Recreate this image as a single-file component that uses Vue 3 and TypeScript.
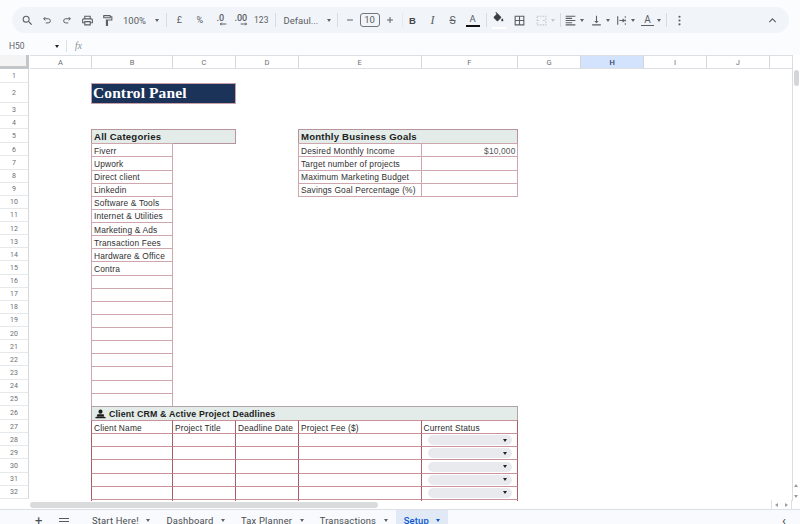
<script setup lang="ts">
interface Cell {
    col: number;
    span?: number;
    row: number;
    text?: string;
    kind?: string;
    align?: string;
}

const columns = ['A', 'B', 'C', 'D', 'E', 'F', 'G', 'H', 'I', 'J', ''];
// row 33 is cut by the scrollbar, its number does not show
const rowNumbers = Array.from({ length: 32 }, (_, i) => i + 1);

// col/row use sheet numbering: A = 1, row 1 = 1
const categories = [
    'Fiverr',
    'Upwork',
    'Direct client',
    'Linkedin',
    'Software & Tools',
    'Internet & Utilities',
    'Marketing & Ads',
    'Transaction Fees',
    'Hardware & Office',
    'Contra',
];
const goals = [
    'Desired Monthly Income',
    'Target number of projects',
    'Maximum Marketing Budget',
    'Savings Goal Percentage (%)',
];
const crmHeaders = ['Client Name', 'Project Title', 'Deadline Date', 'Project Fee ($)', 'Current Status'];

const cells: Cell[] = [
    { col: 2, span: 2, row: 2, text: 'Control Panel', kind: 'title' },
    { col: 2, span: 2, row: 5, text: 'All Categories', kind: 'head' },
    { col: 5, span: 2, row: 5, text: 'Monthly Business Goals', kind: 'head' },
];
for (let i = 0; i < 20; i++) {
    cells.push({ col: 2, row: 6 + i, text: categories[i] });
}
goals.forEach((text, i) => {
    cells.push({ col: 5, row: 6 + i, text });
    cells.push({ col: 6, row: 6 + i, text: i === 0 ? '$10,000' : '', align: 'num' });
});
cells.push({ col: 2, span: 5, row: 26, kind: 'crm-head' });
crmHeaders.forEach((text, i) => {
    cells.push({ col: 2 + i, row: 27, text, kind: 'crm' });
});
for (let r = 28; r <= 33; r++) {
    for (let c = 2; c <= 6; c++) {
        cells.push({ col: c, row: r, kind: c === 6 && r < 33 ? 'crm status' : 'crm' });
    }
}

const place = (c: Cell) => ({
    gridColumn: `${c.col + 1} / span ${c.span ?? 1}`,
    gridRow: `${c.row + 1}`,
});

const tabs = ['Start Here!', 'Dashboard', 'Tax Planner', 'Transactions', 'Setup'];
</script>

<template>
    <div class="app">
        <div class="toolbar-wrap">
            <div class="toolbar">
                <span class="tb">
                    <svg viewBox="0 0 24 24"><path d="M15.5 14h-.79l-.28-.27A6.47 6.47 0 0 0 16 9.5 6.5 6.5 0 1 0 9.5 16c1.61 0 3.09-.59 4.23-1.57l.27.28v.79l5 4.99L20.49 19l-4.99-5zm-6 0C7.01 14 5 11.99 5 9.5S7.01 5 9.5 5 14 7.01 14 9.5 11.99 14 9.5 14z" /></svg>
                </span>
                <span class="tb">
                    <svg viewBox="0 0 24 24" class="line thin"><path d="M8 5 4 9l4 4M4 9h11a5 5 0 0 1 0 10H9" /></svg>
                </span>
                <span class="tb">
                    <svg viewBox="0 0 24 24" class="line thin"><path d="M16 5l4 4-4 4M20 9H9a5 5 0 0 0 0 10h6" /></svg>
                </span>
                <span class="tb">
                    <svg viewBox="0 0 24 24"><path d="M19 8h-1V3H6v5H5c-1.66 0-3 1.34-3 3v6h4v4h12v-4h4v-6c0-1.66-1.34-3-3-3zM8 5h8v3H8V5zm8 12v2H8v-4h8v2zm2-2v-2H6v2H4v-4c0-.55.45-1 1-1h14c.55 0 1 .45 1 1v4h-2z" /></svg>
                </span>
                <span class="tb">
                    <svg viewBox="0 0 24 24"><path d="M18 4V3c0-.55-.45-1-1-1H5c-.55 0-1 .45-1 1v4c0 .55.45 1 1 1h12c.55 0 1-.45 1-1V6h1v4H9v11c0 .55.45 1 1 1h2c.55 0 1-.45 1-1v-9h8V4h-3zm-2 2H6V4h10v2z" /></svg>
                </span>
                <span class="tb-text zoom">100%<i class="caret" /></span>
                <span class="sep" />
                <span class="tb small">£</span>
                <span class="tb small">%</span>
                <span class="tb small stack">.0<svg viewBox="0 0 12 6" class="mini line"><path d="M11 3H2M4 1 2 3l2 2" /></svg></span>
                <span class="tb small stack">.00<svg viewBox="0 0 12 6" class="mini line"><path d="M1 3h9M8 1l2 2-2 2" /></svg></span>
                <span class="tb small num">123</span>
                <span class="sep" />
                <span class="tb-text font">Defaul...<i class="caret" /></span>
                <span class="sep" />
                <span class="tb">
                    <svg viewBox="0 0 24 24" class="line thin"><path d="M5 12h14" /></svg>
                </span>
                <span class="size-box">10</span>
                <span class="tb">
                    <svg viewBox="0 0 24 24" class="line thin"><path d="M5 12h14M12 5v14" /></svg>
                </span>
                <span class="sep faint" />
                <span class="tb letter bold">B</span>
                <span class="tb letter italic">I</span>
                <span class="tb letter strike">S</span>
                <span class="tb letter"><span class="color-a">A</span></span>
                <span class="sep" />
                <span class="tb fill">
                    <svg viewBox="0 0 24 24"><path d="M16.56 8.94 7.62 0 6.21 1.41l2.38 2.38-5.15 5.15c-.59.59-.59 1.54 0 2.12l5.5 5.5c.29.29.68.44 1.06.44s.77-.15 1.06-.44l5.5-5.5c.59-.58.59-1.53 0-2.12zM19 11.5s-2 2.17-2 3.5c0 1.1.9 2 2 2s2-.9 2-2c0-1.33-2-3.5-2-3.5z" /></svg>
                </span>
                <span class="tb">
                    <svg viewBox="0 0 24 24"><path d="M3 3v18h18V3H3zm8 16H5v-6h6v6zm0-8H5V5h6v6zm8 8h-6v-6h6v6zm0-8h-6V5h6v6z" /></svg>
                </span>
                <span class="tb wide disabled">
                    <svg viewBox="0 0 24 24" class="line dash"><path d="M4 4h16v16H4zM4 12h5M15 12h5" /></svg>
                    <i class="caret" />
                </span>
                <span class="sep tight" />
                <span class="tb wide">
                    <svg viewBox="0 0 24 24"><path d="M15 15H3v2h12v-2zm0-8H3v2h12V7zM3 13h18v-2H3v2zm0 8h18v-2H3v2zM3 3v2h18V3H3z" /></svg>
                    <i class="caret" />
                </span>
                <span class="tb wide">
                    <svg viewBox="0 0 24 24"><path d="M16 13h-3V3h-2v10H8l4 4 4-4zM4 19v2h16v-2H4z" /></svg>
                    <i class="caret" />
                </span>
                <span class="tb wide">
                    <svg viewBox="0 0 24 24" class="line"><path d="M5 4v16M19 4v3M19 10v4M19 17v3M8 12h9M14 9l3 3-3 3" /></svg>
                    <i class="caret" />
                </span>
                <span class="tb wide">
                    <span class="rotate-a">A</span>
                    <i class="caret" />
                </span>
                <span class="sep tight last" />
                <span class="tb">
                    <svg viewBox="0 0 24 24"><circle cx="12" cy="5" r="2" /><circle cx="12" cy="12" r="2" /><circle cx="12" cy="19" r="2" /></svg>
                </span>
                <span class="spacer" />
                <span class="tb">
                    <svg viewBox="0 0 24 24" class="line"><path d="m6 15 6-6 6 6" /></svg>
                </span>
            </div>
        </div>

        <div class="formula-bar">
            <span class="name-box">H50<i class="caret dark" /></span>
            <span class="fx-sep" />
            <span class="fx">fx</span>
        </div>

        <div class="sheet">
            <div class="grid">
                <div class="corner" />
                <div
                    v-for="(c, i) in columns"
                    :key="'c' + i"
                    class="col-head"
                    :class="{ active: c === 'H' }"
                >
                    {{ c }}
                </div>
                <div
                    v-for="r in rowNumbers"
                    :key="'r' + r"
                    class="row-head"
                    :style="{ gridRow: r + 1 }"
                >
                    {{ r }}
                </div>
                <div
                    v-for="(cell, i) in cells"
                    :key="i"
                    class="cell"
                    :class="[cell.kind, cell.align]"
                    :style="place(cell)"
                >
                    <template v-if="cell.kind === 'crm-head'">
                        <svg viewBox="0 0 16 14" class="laptop">
                            <circle cx="8" cy="3.6" r="3" />
                            <path d="M3.4 7.4h9.2l1 3.6H2.4zM.6 11.4h14.8v1.8H.6z" />
                        </svg>
                        Client CRM &amp; Active Project Deadlines
                    </template>
                    <span v-else-if="cell.kind === 'crm status'" class="chip"><i class="caret dark" /></span>
                    <template v-else>{{ cell.text }}</template>
                </div>
            </div>
            <div class="vscroll">
                <div class="thumb-v" />
                <div class="spacer" />
                <i class="arrow up" />
                <i class="arrow down" />
            </div>
        </div>

        <div class="hscroll">
            <div class="thumb-h" />
            <div class="spacer" />
            <span class="h-arrows"><i class="arrow left" /><i class="arrow right" /></span>
        </div>

        <div class="tabs">
            <span class="tab-icon plus">+</span>
            <span class="tab-icon menu"><i /><i /><i /></span>
            <span
                v-for="t in tabs"
                :key="t"
                class="tab"
                :class="{ current: t === 'Setup' }"
            >
                {{ t }}<i class="caret" />
            </span>
            <span class="spacer" />
            <span class="tab-prev">‹</span>
        </div>
    </div>
</template>

<style scoped>
.app {
    width: 800px;
    height: 524px;
    overflow: hidden;
    display: flex;
    flex-direction: column;
    background: #fbfcfe;
    font-family: 'Liberation Sans', Arial, sans-serif;
}
.spacer {
    flex: 1;
}
.caret {
    display: inline-block;
    width: 0;
    height: 0;
    border-left: 2.5px solid transparent;
    border-right: 2.5px solid transparent;
    border-top: 3px solid #5f6368;
}
.caret.dark {
    border-top-color: #222;
}

.toolbar-wrap {
    height: 37px;
    padding: 7px 11px 4px 12px;
    box-sizing: border-box;
}
.toolbar {
    height: 26px;
    border-radius: 13px;
    background: #f1f4f9;
    display: flex;
    align-items: center;
    padding-left: 5px;
    padding-right: 7px;
    color: #5a5e62;
    font-family: Roboto, sans-serif;
}
.tb {
    width: 20px;
    height: 20px;
    flex: none;
    display: flex;
    align-items: center;
    justify-content: center;
    position: relative;
}
.tb svg {
    width: 13px;
    height: 13px;
    flex: none;
    fill: #5c6064;
}
.tb svg.line {
    fill: none;
    stroke: #5c6064;
    stroke-width: 2;
}
.tb svg.thin {
    width: 10px;
    height: 10px;
    stroke-width: 2.4;
}
.tb.small {
    font-size: 9px;
    width: 20.5px;
}
.tb.num {
    font-size: 8.5px;
}
.tb.stack {
    flex-direction: column;
    line-height: 8px;
    font-weight: 500;
}
.tb svg.mini {
    width: 8px;
    height: 4px;
    margin-left: 6px;
    stroke-width: 1.5;
}
.tb-text {
    flex: none;
    display: flex;
    align-items: center;
    justify-content: space-between;
    box-sizing: border-box;
    font-size: 9.5px;
}
.zoom {
    width: 46px;
    padding: 0 4px 0 6px;
}
.font {
    width: 56px;
    padding: 0 3px 0 6px;
}
.sep {
    width: 1px;
    height: 14px;
    flex: none;
    margin: 0 2px 0 3px;
    background: #d8dce2;
}
.sep.faint {
    margin: 0;
    margin-left: 2px;
    background: #e6e9ee;
}
.sep.tight {
    margin: 0 1.5px 0 0;
}
.sep.tight.last {
    margin: 0 2.5px 0 1.7px;
}
.size-box {
    width: 20px;
    height: 14px;
    box-sizing: border-box;
    flex: none;
    border: 1px solid #72767a;
    border-radius: 3px;
    font-size: 9.5px;
    text-align: center;
    line-height: 12px;
}
.letter {
    font-size: 9.5px;
}
.bold {
    font-weight: 700;
    color: #444;
    font-family: 'Liberation Sans', sans-serif;
}
.italic {
    font-style: italic;
    font-size: 12px;
    font-family: 'Liberation Serif', serif;
}
.strike {
    text-decoration: line-through;
    font-size: 10.5px;
}
.color-a {
    display: block;
    width: 14px;
    height: 13px;
    line-height: 10px;
    text-align: center;
    border-bottom: 2.5px solid #111;
    box-sizing: border-box;
}
.fill {
    margin-right: 1px;
}
.fill svg {
    margin-top: -4px;
    fill: #3c4043;
}
.fill::after {
    content: '';
    position: absolute;
    left: 3px;
    right: 3px;
    bottom: 1px;
    height: 2.5px;
    background: #fff;
}
.tb.wide {
    width: 25.7px;
    justify-content: flex-start;
    gap: 3px;
    padding-left: 2px;
    box-sizing: border-box;
}
.tb.disabled {
    width: 27px;
    margin-left: 3px;
}
.tb.disabled svg.line {
    stroke: #c4c8cc;
}
.tb svg.dash {
    stroke-dasharray: 3 2;
}
.tb.disabled .caret {
    border-top-color: #c4c8cc;
}
.rotate-a {
    width: 13px;
    text-align: center;
    font-size: 10px;
    line-height: 10px;
    border-bottom: 1px solid #5c6064;
}

.formula-bar {
    height: 18px;
    flex: none;
    display: flex;
    align-items: center;
    font-family: Roboto, sans-serif;
    color: #5f6368;
    font-size: 8.5px;
}
.name-box {
    width: 59px;
    padding-left: 9px;
    box-sizing: border-box;
    display: flex;
    align-items: center;
    justify-content: space-between;
}
.fx-sep {
    width: 1px;
    height: 12px;
    margin-left: 7px;
    background: #dde0e4;
}
.fx {
    margin-left: 8px;
    font: italic 9.5px 'Liberation Serif', serif;
    color: #8a8e92;
}

.sheet {
    height: 446px;
    flex: none;
    display: flex;
    background: #fff;
    box-sizing: border-box;
}
.grid {
    width: 792.6px;
    flex: none;
    overflow: hidden;
    display: grid;
    grid-template-columns: 29px 62px 81px 63px 63px 122.5px 96.5px 63px 63.3px 62.6px 63px 24.2px;
    grid-template-rows: 14px 13.7px 20.6px 13px 13px 14px repeat(20, 13.13px) 14.3px repeat(7, 13.13px);
    border-right: 1px solid #dadce0;
    box-sizing: border-box;
}
.corner {
    grid-column: 1;
    grid-row: 1;
    background: #f4f4f4;
    border-right: 3px solid #c4c7c9;
    border-bottom: 3px solid #c4c7c9;
    box-sizing: border-box;
}
.col-head {
    grid-row: 1;
    margin: 0 -1px 0 1px;
    display: flex;
    align-items: center;
    justify-content: center;
    font-size: 7.5px;
    color: #6b6e72;
    border-top: 1px solid #dcdfe3;
    border-right: 1px solid #d4d6d9;
    border-bottom: 1px solid #dcdfe3;
    box-sizing: border-box;
    font-family: Roboto, sans-serif;
}
.col-head.active {
    background: #d3e3fd;
    color: #2a3a66;
    font-weight: 500;
}
.row-head {
    grid-column: 1;
    padding-top: 1px;
    display: flex;
    align-items: center;
    justify-content: center;
    font-size: 7px;
    color: #6b6e72;
    border-right: 1px solid #d4d6d9;
    border-bottom: 1px solid #e6e8ea;
    box-sizing: border-box;
    font-family: Roboto, sans-serif;
}
.cell {
    margin: 0 -1px -1px 0;
    min-width: 0;
    padding: 1px 1.5px 0 2px;
    border: 1px solid #cda7ad;
    box-sizing: border-box;
    display: flex;
    align-items: center;
    font-size: 8.4px;
    letter-spacing: 0.16px;
    color: #2f2f2f;
    white-space: nowrap;
    overflow: hidden;
}
.cell.num {
    justify-content: flex-end;
    color: #555;
}
.cell.title {
    background: #1b3358;
    color: #fff;
    font: 700 15.5px 'Liberation Serif', serif;
    letter-spacing: 0.1px;
    border-color: #c9a0a8;
    padding: 0 0 0 1px;
}
.cell.head {
    background: #e3ece8;
    border-color: #b7949b;
    font-weight: 700;
    font-size: 9.6px;
    letter-spacing: 0.2px;
    color: #1d1d1d;
    padding-top: 0;
}
.cell.crm {
    border-color: #c9929b #ab5c68;
    color: #2b2b2b;
}
.cell.crm.status {
    padding-top: 0;
}
.cell.crm-head {
    background: #e3ece8;
    border-color: #b2a4a6;
    font-weight: 700;
    font-size: 8.8px;
    color: #1d1d1d;
    padding-left: 2.5px;
}
.laptop {
    width: 11px;
    height: 10px;
    margin-right: 3.5px;
    fill: #1d1d1d;
    flex: none;
}
.chip {
    width: 84px;
    height: 10px;
    margin-left: 4px;
    border-radius: 5px;
    background: #e8eaed;
    display: flex;
    align-items: center;
    justify-content: flex-end;
    padding-right: 4.5px;
    box-sizing: border-box;
}

.vscroll {
    flex: 1;
    display: flex;
    flex-direction: column;
    align-items: center;
    padding: 15px 0 3px;
    gap: 8px;
    box-sizing: border-box;
}
.thumb-v {
    width: 5px;
    height: 16px;
    border-radius: 3px;
    background: #d4d6d8;
}
.arrow {
    display: block;
    width: 0;
    height: 0;
    border: 2px solid transparent;
}
.arrow.up {
    border-bottom: 3px solid #9a9da0;
    border-top: 0;
}
.arrow.down {
    border-top: 3px solid #9a9da0;
    border-bottom: 0;
}
.arrow.left {
    border-right: 3px solid #9a9da0;
    border-left: 0;
}
.arrow.right {
    border-left: 3px solid #9a9da0;
    border-right: 0;
}

.hscroll {
    height: 9px;
    flex: none;
    display: flex;
    align-items: center;
    padding: 0 0 1px 30px;
    box-sizing: border-box;
    background: #fff;
    border-bottom: 1px solid #dcdfe3;
}
.thumb-h {
    width: 348px;
    height: 6px;
    border-radius: 3px;
    background: #d9dbdd;
}
.h-arrows {
    width: 19px;
    height: 9px;
    margin-right: 8px;
    display: flex;
    align-items: center;
    justify-content: space-around;
    border-left: 1px solid #dcdfe3;
    border-right: 1px solid #dcdfe3;
}

.tabs {
    flex: 1;
    min-height: 0;
    display: flex;
    align-items: flex-start;
    background: #f8fafd;
    font-family: Roboto, sans-serif;
    font-size: 9.4px;
    color: #4a4d50;
    overflow: hidden;
}
.tab-icon {
    flex: none;
}
.plus {
    margin-left: 35px;
    width: 18px;
    font-size: 13px;
    line-height: 22px;
}
.menu {
    margin-left: 6px;
    margin-right: 15px;
    width: 10px;
    display: flex;
    flex-direction: column;
    gap: 2px;
    padding-top: 8px;
}
.menu i {
    height: 1px;
    background: #55585c;
}
.tab {
    flex: none;
    display: flex;
    align-items: center;
    gap: 7.5px;
    height: 14px;
    padding: 7px 8px 0;
    box-sizing: border-box;
    letter-spacing: 0.2px;
    white-space: nowrap;
}
.tab.current {
    background: #e1e9f7;
    color: #0b57d0;
    font-weight: 500;
}
.tab.current .caret {
    border-top-color: #0b57d0;
}
.tab-prev {
    margin-right: 14px;
    font-size: 13px;
    line-height: 22px;
    color: #444;
}
</style>
